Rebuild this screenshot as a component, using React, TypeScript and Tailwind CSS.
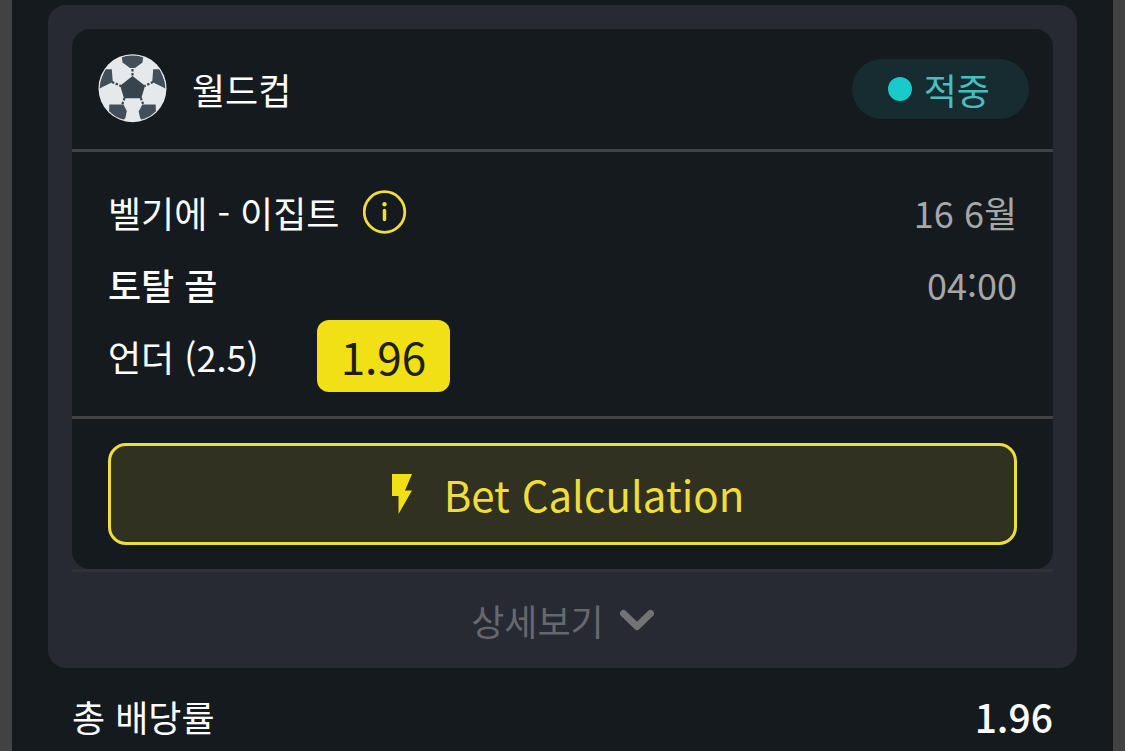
interface Bet {
  league: string;
  status: string;
  match: string;
  market: string;
  pick: string;
  odds: string;
  date: string;
  time: string;
}

const bet: Bet = {
  league: '월드컵',
  status: '적중',
  match: '벨기에 - 이집트',
  market: '토탈 골',
  pick: '언더 (2.5)',
  odds: '1.96',
  date: '16 6월',
  time: '04:00',
};

function SoccerBall() {
  return (
    <svg className="w-[70px] h-[70px] shrink-0" viewBox="0 0 70 70" aria-hidden="true">
      <defs>
        <clipPath id="ball">
          <circle cx="35.5" cy="34.2" r="32.8" />
        </clipPath>
      </defs>
      <circle cx="35.5" cy="34.2" r="34" fill="#e6e9eb" />
      <g fill="#424f5b" clipPath="url(#ball)">
        <path d="M35.5 22 48 31.700 44.300 44.300H27L23.200 31.700Z" fill="#37434d" />
        <path d="M24.500 1Q35.500 -1 46.500 1L45.500 8.500 38 14H33L25.500 8.500Z" />
        <path d="M14.800 15.300H8L0 36 4.500 33.500 15.800 28Z" />
        <path d="M56.200 15.300H63L71 36 66.500 33.500 55.200 28Z" />
        <path d="M12.300 50.500H26.500L29.800 57 28.500 63.500 26 67 12 60Z" />
        <path d="M58.700 50.500H45.300L41.700 57.500 43 63.500 45 67 59 60Z" />
      </g>
      <g stroke="#37434d" strokeWidth="2.200" strokeDasharray="2.400 1.600" fill="none">
        <path d="M35.5 15V23" />
        <path d="M15 28 24 32" />
        <path d="M56 28 47.500 32" />
        <path d="M27.500 44 25 51" />
        <path d="M43.800 44 46.500 51" />
      </g>
    </svg>
  );
}

function InfoIcon() {
  return (
    <svg className="w-11 h-11" viewBox="0 0 44 44" fill="none" aria-hidden="true">
      <circle cx="21.5" cy="22" r="20.3" stroke="#eedd3a" strokeWidth="2.800" />
      <circle cx="21.5" cy="14.2" r="2.200" fill="#eedd3a" />
      <path d="M21.500 20.500V29.500" stroke="#eedd3a" strokeWidth="3.500" strokeLinecap="round" />
    </svg>
  );
}

export default function App() {
  return (
    <div
      lang="ko"
      className="min-h-screen bg-[#151a1e] border-x-12 border-[#424242] px-9 pt-[5px] font-['Noto_Sans_CJK_KR',sans-serif] text-4xl leading-[72px] text-white"
    >
      <section className="bg-[#272a32] rounded-[18px] px-6 pt-6">
        <article className="bg-[#151a1e] rounded-[18px]">
          {/* Cabecera */}
          <header className="h-[123px] flex items-center justify-between pl-[25px] pr-6 border-b-3 border-[#424242]">
            <div className="flex items-center gap-[25px]">
              <SoccerBall />
              <h2>{bet.league}</h2>
            </div>
            <span className="h-[60px] pl-9 pr-[39px] flex items-center gap-3 rounded-full bg-[#162c30] text-[#45bfc0]">
              <span className="w-6 h-6 rounded-full bg-[#1ac9c9]" />
              {bet.status}
            </span>
          </header>

          {/* Apuesta */}
          <div className="flex justify-between px-9 pt-6 pb-6 border-b-3 border-[#424242]">
            <div>
              <div className="flex items-center gap-6">
                <span>{bet.match}</span>
                <button type="button" aria-label="정보">
                  <InfoIcon />
                </button>
              </div>
              <p className="font-medium">{bet.market}</p>
              <div className="flex items-center gap-[58px]">
                <span>{bet.pick}</span>
                <span className="px-6 rounded-xl bg-[#f0e015] text-[#20200a] text-[44px]">{bet.odds}</span>
              </div>
            </div>
            <div className="text-right text-[#a5a7a8]">
              <p>{bet.date}</p>
              <p>{bet.time}</p>
            </div>
          </div>

          <div className="px-9 py-6">
            <button
              type="button"
              className="w-full h-[102px] flex items-center justify-center gap-5 rounded-[18px] border-3 border-[#eedd3a] bg-[#303120] text-[#eedd3a] text-[42px]"
            >
              <svg className="w-[43px] h-10" viewBox="-11 0 43 40" fill="#f0e015" aria-hidden="true">
                <path d="M0 0H20L13 16.500H20L6.500 40V22H0Z" />
              </svg>
              Bet Calculation
            </button>
          </div>
        </article>

        <button
          type="button"
          className="w-full h-[99px] flex items-center justify-center gap-4 border-t-3 border-[#303238] text-[#66686d]"
        >
          상세보기
          <svg className="w-[34px] h-[22px]" viewBox="0 0 34 22" fill="none" aria-hidden="true">
            <path d="M3.500 4.500 17 17.500 30.500 4.500" stroke="#727377" strokeWidth="7" strokeLinecap="round" strokeLinejoin="round" />
          </svg>
        </button>
      </section>

      <div className="flex items-center justify-between px-6 pt-3">
        <span>총 배당률</span>
        <span className="font-medium text-[39px]">1.96</span>
      </div>
    </div>
  );
}
